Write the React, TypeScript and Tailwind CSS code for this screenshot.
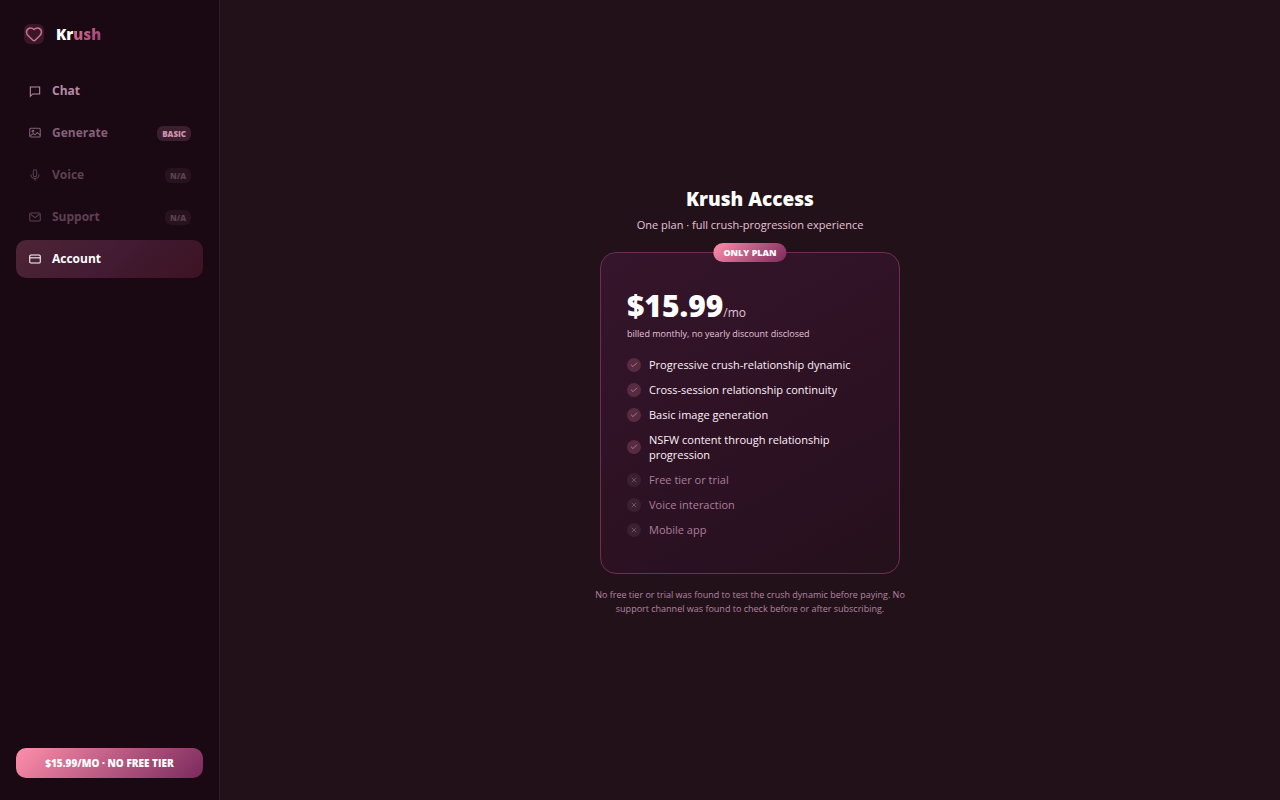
import clsx from 'clsx';
import { Check, Heart, X } from 'lucide-react';
import type { ReactNode } from 'react';

type NavItem = {
  label: string;
  icon: ReactNode;
  state: 'normal' | 'limited' | 'off' | 'active';
  badge?: string;
};

const navItems: NavItem[] = [
  {
    label: 'Chat',
    icon: <path d="M4 5h16v12H8l-4 4z" />,
    state: 'normal',
  },
  {
    label: 'Generate',
    icon: (
      <>
        <rect x="3" y="4" width="18" height="15" rx="2" />
        <circle cx="8.5" cy="9" r="1.5" />
        <path d="M4 17l5-4 3 2 4-4 5 5" />
      </>
    ),
    state: 'limited',
    badge: 'BASIC',
  },
  {
    label: 'Voice',
    icon: (
      <>
        <rect x="9" y="3" width="6" height="12" rx="3" />
        <path d="M5 11a7 7 0 0 0 14 0M12 18v4" />
      </>
    ),
    state: 'off',
    badge: 'N/A',
  },
  {
    label: 'Support',
    icon: (
      <>
        <rect x="3" y="5" width="18" height="14" rx="2" />
        <path d="M4 7l8 6 8-6" />
      </>
    ),
    state: 'off',
    badge: 'N/A',
  },
  {
    label: 'Account',
    icon: (
      <>
        <rect x="3" y="5" width="18" height="14" rx="2" />
        <path d="M3 10h18" />
      </>
    ),
    state: 'active',
  },
];

const features = [
  { text: 'Progressive crush-relationship dynamic', included: true },
  { text: 'Cross-session relationship continuity', included: true },
  { text: 'Basic image generation', included: true },
  { text: 'NSFW content through relationship progression', included: true },
  { text: 'Free tier or trial', included: false },
  { text: 'Voice interaction', included: false },
  { text: 'Mobile app', included: false },
];

const NavLink = ({ label, icon, state, badge }: NavItem) => {
  return (
    <a
      href="#"
      className={clsx(
        'flex h-[38px] items-center gap-2.5 rounded-[10px] px-3 text-xs font-bold',
        state === 'normal' && 'text-[#b58ba6]',
        state === 'limited' && 'text-[#85607a]',
        state === 'off' && 'text-[#5f4053]',
        state === 'active' &&
          'bg-linear-135 from-[#4d2535] via-[#431b33] to-[#3b1322] text-white',
      )}
    >
      <svg
        viewBox="0 0 24 24"
        className="size-3.5 fill-none stroke-current stroke-[1.8]"
        aria-hidden="true"
      >
        {icon}
      </svg>
      <span className="flex-1">{label}</span>
      {badge && (
        <span
          className={clsx(
            'rounded-md px-[5px] text-[8px] leading-[15px] font-extrabold',
            state === 'limited'
              ? 'bg-[#3b1f2e] text-[#cf93ae]'
              : 'bg-[#27131e] text-[#5f4053]',
          )}
        >
          {badge}
        </span>
      )}
    </a>
  );
};

const Sidebar = () => {
  return (
    <aside className="flex w-[220px] shrink-0 flex-col border-r border-[#351a29] bg-[#1a0912] px-4 pt-6 pb-[22px]">
      <div className="flex h-5 items-center gap-3 px-2">
        <div className="flex size-5 items-center justify-center rounded-md bg-[#3a1727] text-[#c96f92]">
          <Heart size={18} strokeWidth={2} />
        </div>
        <div className="text-[15px] font-extrabold text-white">
          Kr
          <span className="bg-linear-135 from-[#e47a9c] to-[#8d3a69] bg-clip-text text-transparent">
            ush
          </span>
        </div>
      </div>
      <nav className="mt-7 flex flex-1 flex-col gap-1">
        {navItems.map((item) => (
          <NavLink key={item.label} {...item} />
        ))}
      </nav>
      <button
        type="button"
        className="h-[30px] rounded-[10px] bg-linear-135 from-[#ff8fab] to-[#7b2a5d] text-[10px] font-extrabold text-white"
      >
        $15.99/MO · NO FREE TIER
      </button>
    </aside>
  );
};

const PlanCard = () => {
  return (
    <section className="relative mt-[18px] w-[300px] rounded-2xl border border-[#702d51] bg-linear-150 from-[#35152b] via-[#28101f] via-85% to-[#23111a] px-[26px] pt-8 pb-9">
      <span className="absolute -top-2.5 left-1/2 -translate-x-1/2 rounded-full bg-linear-135 from-[#ff8fab] to-[#7b2a5d] px-2.5 text-[9px] leading-[19px] font-extrabold whitespace-nowrap text-white">
        ONLY PLAN
      </span>
      <div className="text-[30px] leading-[42px] font-extrabold text-white">
        $15.99
        <span className="text-xs font-normal text-[#e3c3d6]">/mo</span>
      </div>
      <p className="text-[9px] leading-[14px] text-[#e3c3d6]">
        billed monthly, no yearly discount disclosed
      </p>
      <ul className="mt-4 flex flex-col gap-2.5">
        {features.map(({ text, included }) => (
          <li
            key={text}
            className={clsx(
              'flex items-center gap-2 text-[11px] leading-[15px]',
              included ? 'text-[#fff0f8]' : 'text-[#ab7f9b]',
            )}
          >
            <span
              className={clsx(
                'flex size-3.5 shrink-0 items-center justify-center rounded-full',
                included
                  ? 'bg-[#582c40] text-[#b3748d]'
                  : 'bg-[#3a2031] text-[#8d6a80]',
              )}
            >
              {included ? (
                <Check size={8} strokeWidth={3} />
              ) : (
                <X size={8} strokeWidth={2} />
              )}
            </span>
            {text}
          </li>
        ))}
      </ul>
    </section>
  );
};

const App = () => {
  return (
    <div className="flex min-h-screen bg-[#23111a] font-['Open_Sans',sans-serif]">
      <Sidebar />
      <main className="flex flex-1 flex-col items-center justify-center">
        <h1 className="text-[19px] leading-[30px] font-extrabold text-white">
          Krush Access
        </h1>
        <p className="mt-0.5 text-[11px] leading-[18px] text-[#e3c3d6]">
          One plan · full crush-progression experience
        </p>
        <PlanCard />
        <p className="mt-3.5 w-[320px] text-center text-[9px] leading-[14px] text-[#b286a2]">
          No free tier or trial was found to test the crush dynamic before
          paying. No support channel was found to check before or after
          subscribing.
        </p>
      </main>
    </div>
  );
};

export default App;
